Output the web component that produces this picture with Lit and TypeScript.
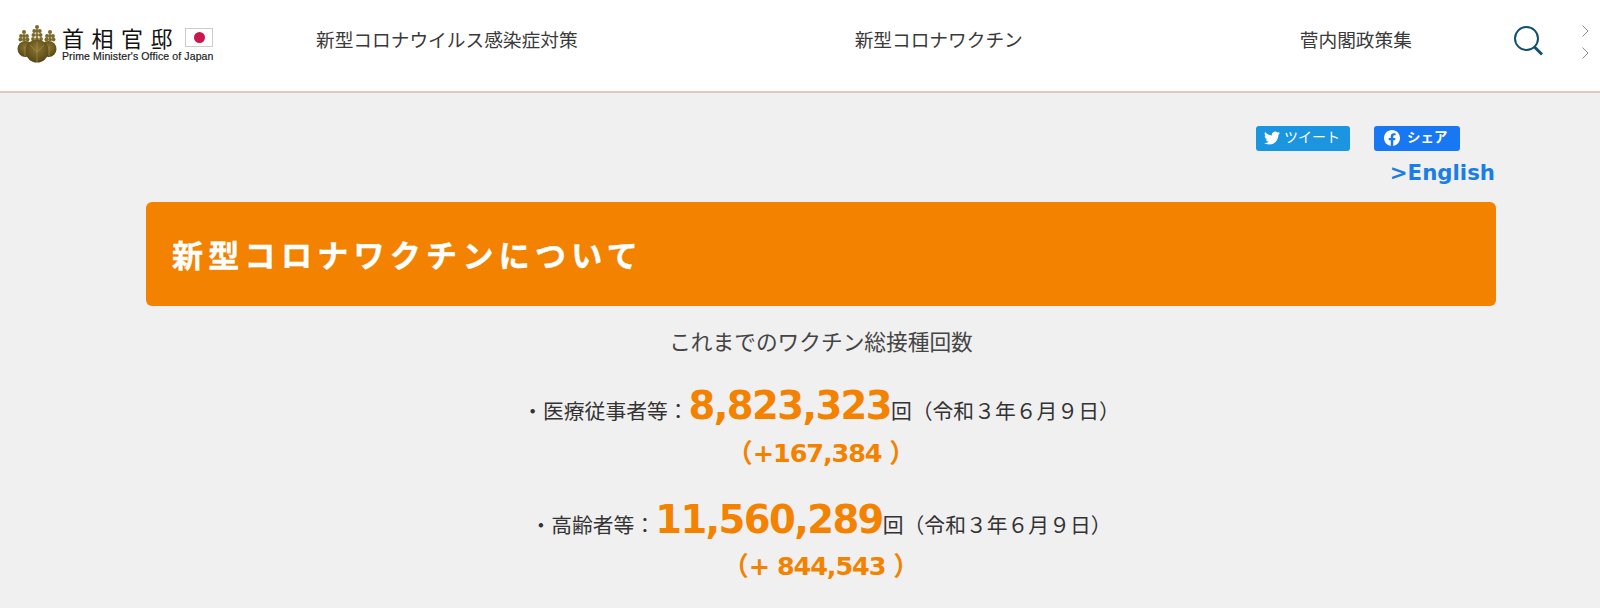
import { LitElement, html, css, svg } from "lit";
import { customElement } from "lit/decorators.js";

const dots = (cx: number, rows: number[][]) =>
  rows.map(([dy, dx]) =>
    dx === 0
      ? svg`<circle cx=${cx} cy=${dy} r="2"/>`
      : svg`<circle cx=${cx - dx} cy=${dy} r="1.900"/><circle cx=${cx} cy=${dy} r="1.900"/><circle cx=${cx + dx} cy=${dy} r="1.900"/>`
  );

@customElement("app-root")
export class AppRoot extends LitElement {
  static styles = css`
    :host {
      display: block;
      height: 608px;
      overflow: hidden;
      background: #f0f0f0;
      color: #333;
      font-family: "Noto Sans CJK JP", "Noto Sans", sans-serif;
    }
    header {
      height: 91px;
      background: #fff;
      border-bottom: 2px solid #dccbb9;
      display: flex;
      align-items: center;
      position: relative;
    }
    .logo {
      width: 316px;
      flex: none;
      display: flex;
      align-items: flex-start;
      padding-left: 17px;
      box-sizing: border-box;
      gap: 5px;
      margin-top: -4px;
    }
    .logo svg { width: 40px; height: 38px; flex: none; }
    .logo-text { display: flex; flex-direction: column; width: 151px; }
    .logo-top { display: flex; align-items: center; justify-content: space-between; height: 25px; }
    .kanji { font-size: 22px; letter-spacing: 7.500px; color: #111; line-height: 25px; white-space: nowrap; }
    .flag {
      width: 28px;
      height: 19px;
      border: 1px solid #ccc;
      background: #fff;
      display: flex;
      align-items: center;
      justify-content: center;
      box-sizing: border-box;
    }
    .flag i { width: 11px; height: 11px; border-radius: 50%; background: #c9164f; display: block; }
    .en {
      font-family: "Liberation Sans", sans-serif;
      font-size: 10.500px;
      line-height: 12px;
      color: #222;
      white-space: nowrap;
      -webkit-text-stroke: 0.2px #222;
      letter-spacing: 0.12px;
    }
    nav { display: flex; gap: 277px; font-size: 18.700px; color: #3a3a3a; white-space: nowrap; padding-bottom: 14px; }
    .search { position: absolute; left: 1513px; top: 25px; width: 31px; height: 31px; }
    .chev { position: absolute; left: 1581px; width: 9px; height: 14px; }
    .c1 { top: 24px; }
    .c2 { top: 46px; }
    main { width: 1350px; margin-left: 146px; }
    .share { display: flex; justify-content: flex-end; gap: 24px; padding: 33px 36px 0 0; }
    .btn {
      height: 25px;
      border-radius: 3px;
      color: #fff;
      display: flex;
      align-items: center;
      box-sizing: border-box;
      font-size: 14px;
    }
    .btn span { margin-bottom: 5px; }
    .tw { width: 94px; background: #1b95e0; padding-left: 8px; gap: 4px; }
    .fb { width: 86px; background: #1877f2; padding-left: 10px; gap: 7px; font-weight: 700; font-size: 13.500px; }
    .btn svg { width: 16px; height: 16px; flex: none; margin-bottom: 1px; }
    .english {
      text-align: right;
      font-family: "DejaVu Sans", sans-serif;
      font-weight: 700;
      font-size: 21.300px;
      line-height: 30px;
      color: #1a7ee6;
      margin-top: 7px;
      padding-right: 1px;
    }
    h1 {
      margin: 14px 0 0;
      height: 104px;
      background: #f38200;
      border-radius: 6px;
      color: #fff;
      font-size: 31px;
      font-weight: 700;
      letter-spacing: 5.300px;
      line-height: 104px;
      padding-left: 26px;
      white-space: nowrap;
      -webkit-text-stroke: 0.4px #fff;
    }
    .body { text-align: center; }
    .sub { font-size: 21.700px; line-height: 40px; margin-top: 15px; color: #444; }
    .row { white-space: nowrap; font-size: 20.800px; display: flex; justify-content: center; align-items: baseline; height: 44px; line-height: 44px; }
    .r1 { margin-top: 23px; }
    .r2 { margin-top: 27px; }
    .num {
      font-family: "DejaVu Sans", sans-serif;
      font-weight: 700;
      color: #f38200;
      font-size: 38.500px;
      letter-spacing: -1.600px;
    }
    .delta {
      color: #f38200;
      font-family: "DejaVu Sans", "Noto Sans CJK JP", sans-serif;
      font-weight: 700;
      font-size: 25.500px;
      letter-spacing: -1.100px;
      line-height: 36px;
      margin-top: 5px;
      white-space: pre;
    }
    .delta .p { font-family: "Noto Sans CJK JP", sans-serif; font-size: 26px; letter-spacing: 0; }
    .d2 { margin-top: 4px; }
  `;

  render() {
    return html`
      <header>
        <div class="logo">
          <svg viewBox="0 0 40 38">
            <defs>
              <radialGradient id="g" cx=".5" cy=".4" r=".7">
                <stop offset="0" stop-color="#8c7730" />
                <stop offset="1" stop-color="#4f3f10" />
              </radialGradient>
            </defs>
            <g fill="#7d6a2a">
              ${dots(20, [[2, 0], [6, 2.8], [10, 3.6], [14, 4]])}
              ${dots(7, [[7, 0], [11, 3], [14.500, 3.6]])}
              ${dots(33, [[7, 0], [11, 3], [14.500, 3.6]])}
            </g>
            <circle cx="8.500" cy="24" r="8" fill="url(#g)" />
            <circle cx="31.500" cy="24" r="8" fill="url(#g)" />
            <circle cx="20" cy="26" r="11.500" fill="url(#g)" />
            <path d="M20 17v20M20 27l-7-7M20 27l7-7M8 22v9M32 22v9" stroke="#a8955a" stroke-width=".6" fill="none"/>
          </svg>
          <div class="logo-text">
            <div class="logo-top"><span class="kanji">首相官邸</span><span class="flag"><i></i></span></div>
            <span class="en">Prime Minister's Office of Japan</span>
          </div>
        </div>
        <nav>
          <span>新型コロナウイルス感染症対策</span>
          <span>新型コロナワクチン</span>
          <span>菅内閣政策集</span>
        </nav>
        <svg class="search" viewBox="0 0 31 31" fill="none" stroke="#12506f">
          <circle cx="13.500" cy="13.500" r="11.500" stroke-width="2" />
          <path d="M21.500 22l7.500 7.500" stroke-width="3" />
        </svg>
        <svg class="chev c1" viewBox="0 0 9 14" fill="none" stroke="#8a8f94" stroke-width="1">
          <path d="M1.500 1.500l5.500 5.500-5.500 5.500" />
        </svg>
        <svg class="chev c2" viewBox="0 0 9 14" fill="none" stroke="#8a8f94" stroke-width="1">
          <path d="M1.500 1.500l5.500 5.500-5.500 5.500" />
        </svg>
      </header>
      <main>
        <div class="share">
          <div class="btn tw">
            <svg viewBox="0 0 24 24" fill="#fff">
              <path d="M23.950 4.570a10 10 0 0 1-2.820.770 4.960 4.960 0 0 0 2.160-2.720c-.950.550-2 .950-3.130 1.180a4.920 4.920 0 0 0-8.380 4.480C7.690 8.100 4.070 6.130 1.640 3.160a4.820 4.820 0 0 0-.66 2.470c0 1.710.870 3.210 2.190 4.100a4.900 4.900 0 0 1-2.230-.620v.060a4.920 4.920 0 0 0 3.950 4.830 5 5 0 0 1-2.210.080 4.940 4.940 0 0 0 4.600 3.420A9.870 9.870 0 0 1 0 19.540a14 14 0 0 0 7.560 2.210c9.050 0 14-7.500 14-13.980 0-.210 0-.420-.020-.630a9.940 9.940 0 0 0 2.460-2.550z"/>
            </svg>
            <span>ツイート</span>
          </div>
          <div class="btn fb">
            <svg viewBox="0 0 24 24" fill="#fff">
              <path d="M24 12.070C24 5.400 18.630 0 12 0S0 5.400 0 12.070C0 18.100 4.390 23.100 10.130 24v-8.440H7.080v-3.490h3.050V9.410c0-3.020 1.790-4.690 4.530-4.690 1.310 0 2.680.240 2.680.240v2.970h-1.510c-1.490 0-1.960.930-1.960 1.890v2.250h3.330l-.530 3.490h-2.800V24C19.610 23.100 24 18.100 24 12.070z"/>
            </svg>
            <span>シェア</span>
          </div>
        </div>
        <div class="english">&gt;English</div>
        <h1>新型コロナワクチンについて</h1>
        <div class="body">
          <div class="sub">これまでのワクチン総接種回数</div>
          <div class="row r1">・医療従事者等：<span class="num">8,823,323</span>回（令和３年６月９日）</div>
          <div class="delta"><span class="p">（</span>+167,384 <span class="p">）</span></div>
          <div class="row r2">・高齢者等：<span class="num">11,560,289</span>回（令和３年６月９日）</div>
          <div class="delta d2"><span class="p">（</span>+ 844,543 <span class="p">）</span></div>
        </div>
      </main>
    `;
  }
}
